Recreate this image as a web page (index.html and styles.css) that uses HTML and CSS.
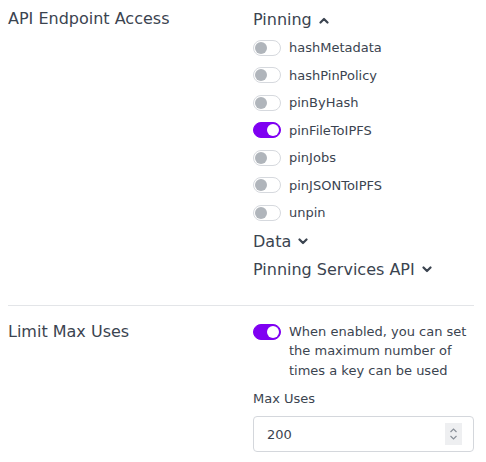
FILE: index.html
```html
<!DOCTYPE html>
<html>
<head>
<meta charset="utf-8">
<link rel="stylesheet" href="styles.css">
</head>
<body>
<div class="page">
  <section class="row">
    <div class="label">API Endpoint Access</div>
    <div class="control">
      <div class="group-head">Pinning <svg class="chev" viewBox="0 0 10 7" width="10" height="7"><path d="M1.5 5.5 L5 2 L8.5 5.5" /></svg></div>
      <div class="item"><span class="toggle"></span><span>hashMetadata</span></div>
      <div class="item"><span class="toggle"></span><span>hashPinPolicy</span></div>
      <div class="item"><span class="toggle"></span><span>pinByHash</span></div>
      <div class="item"><span class="toggle on"></span><span>pinFileToIPFS</span></div>
      <div class="item"><span class="toggle"></span><span>pinJobs</span></div>
      <div class="item"><span class="toggle"></span><span>pinJSONToIPFS</span></div>
      <div class="item"><span class="toggle"></span><span>unpin</span></div>
      <div class="group-head group-gap">Data <svg class="chev" viewBox="0 0 10 7" width="10" height="7"><path d="M1.5 1.5 L5 5 L8.5 1.5" /></svg></div>
      <div class="group-head">Pinning Services API <svg class="chev" viewBox="0 0 10 7" width="10" height="7"><path d="M1.5 1.5 L5 5 L8.5 1.5" /></svg></div>
    </div>
  </section>
  <hr class="divider">
  <section class="row row2">
    <div class="label label2">Limit Max Uses</div>
    <div class="control">
      <div class="limit">
        <span class="toggle on"></span>
        <p class="desc">When enabled, you can set the maximum number of times a key can be used</p>
      </div>
      <div class="field-label">Max Uses</div>
      <div class="input">
        <span class="value">200</span>
        <span class="spin"><svg viewBox="0 0 17 22" width="17" height="22"><path d="M5.5 9 L8.5 6 L11.5 9 M5.5 13 L8.5 16 L11.5 13" /></svg></span>
      </div>
    </div>
  </section>
</div>
</body>
</html>
```
FILE: styles.css
```css
html, body {
  margin: 0;
  padding: 0;
  background: #ffffff;
}
body {
  font-family: "DejaVu Sans", sans-serif;
  color: #3b4450;
}
.page {
  padding: 6px 12px 0 8px;
}
.row {
  display: grid;
  grid-template-columns: 245px 1fr;
}
.label {
  font-size: 16px;
  line-height: 28px;
  margin-top: -1px;
}
.group-head {
  font-size: 16px;
  line-height: 28px;
  height: 28px;
  display: flex;
  align-items: center;
  gap: 7px;
}
.group-gap {
  margin-top: 1px;
}
.chev {
  fill: none;
  stroke: #3b4450;
  stroke-width: 2.2;
  stroke-linecap: round;
  stroke-linejoin: round;
}
.item {
  height: 27.5px;
  display: flex;
  align-items: center;
  gap: 8px;
  font-size: 13px;
}
.toggle {
  position: relative;
  flex: none;
  width: 28px;
  height: 16px;
  box-sizing: border-box;
  border: 1px solid #d6d9de;
  border-radius: 8px;
  background: #ffffff;
}
.toggle::after {
  content: "";
  position: absolute;
  left: 1px;
  top: 1px;
  width: 12px;
  height: 12px;
  border-radius: 50%;
  background: #b0b5bb;
}
.toggle.on {
  background: #7f00f2;
  border-color: #7f00f2;
}
.toggle.on::after {
  left: 13px;
  background: #ffffff;
}
.divider {
  border: 0;
  border-top: 1px solid #e3e5e8;
  margin: 21px 0 16px;
}
.label2 {
  line-height: 20px;
  margin-top: 0;
}
.limit {
  display: flex;
  gap: 8px;
  align-items: flex-start;
}
.limit .toggle {
  margin-top: 2px;
}
.desc {
  margin: 0;
  font-size: 13px;
  line-height: 19.5px;
}
.field-label {
  font-size: 13px;
  line-height: 20px;
  margin-top: 9px;
}
.input {
  margin-top: 7px;
  height: 36px;
  box-sizing: border-box;
  border: 1px solid #d4d7dc;
  border-radius: 4px;
  display: flex;
  align-items: center;
  justify-content: space-between;
  padding: 0 11px 0 13px;
}
.value {
  font-size: 13px;
}
.spin {
  display: flex;
  background: #eeeff1;
}
.spin svg {
  fill: none;
  stroke: #8a9099;
  stroke-width: 1.2;
}
```
